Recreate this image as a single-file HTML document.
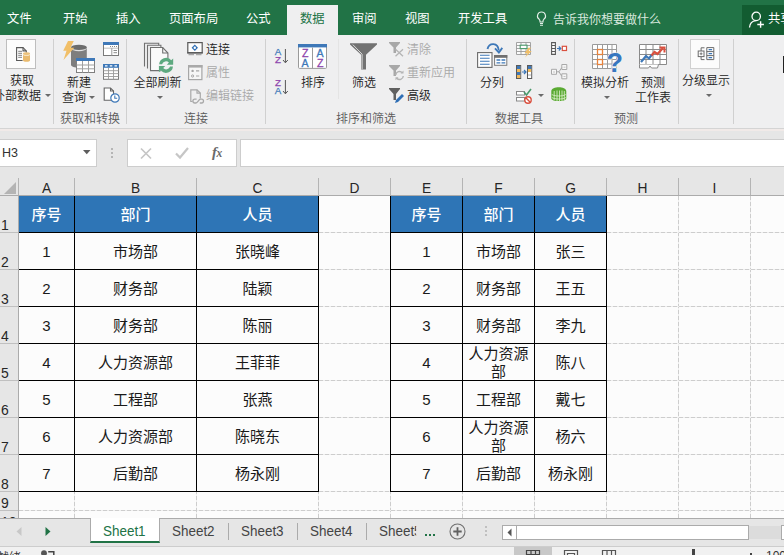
<!DOCTYPE html>
<html><head><meta charset="utf-8"><title>Excel</title>
<style>
html,body{margin:0;padding:0;}
body{width:784px;height:555px;overflow:hidden;position:relative;background:#fcfcfc;font-family:"Liberation Sans","Noto Sans CJK SC",sans-serif;font-size:12px;color:#262626;}
.a{position:absolute;white-space:nowrap;}
svg{position:absolute;overflow:visible;}
#tabs{left:0;top:0;width:784px;height:35px;background:#217346;}
.tab{position:absolute;top:11px;color:#fff;font-size:12.3px;line-height:16px;white-space:nowrap;}
#ribbon{left:0;top:35px;width:784px;height:93px;background:#efeff0;}
#fbar{left:0;top:129px;width:784px;height:48px;background:#e6e6e6;}
.rt{font-weight:350;position:absolute;font-size:12px;line-height:16px;white-space:nowrap;color:#222;}
.gl{font-weight:350;position:absolute;font-size:12px;line-height:16px;white-space:nowrap;color:#5a5a5a;}
.dis{color:#a8a8a8;}
.sep{position:absolute;top:39px;width:1px;height:85px;background:#d0d0d0;}
.dd{position:absolute;width:0;height:0;border-left:3px solid transparent;border-right:3px solid transparent;border-top:3px solid #6a6a6a;}
.ch{transform:scaleX(.9);position:absolute;top:177px;height:18px;text-align:center;font-size:15.3px;line-height:21px;color:#262626;}
.rh{position:absolute;left:0;width:18px;font-size:15.2px;color:#262626;}
.rh span{position:absolute;left:.5px;bottom:-.5px;line-height:16px;transform:scaleX(.92);transform-origin:0 0;}
.cell{position:absolute;box-sizing:border-box;border-right:1px solid #000;border-bottom:1px solid #000;text-align:center;font-size:15px;color:#1a1a1a;background:#fcfcfc;display:flex;align-items:center;justify-content:center;line-height:18.4px;white-space:normal;}
.cell span{position:relative;top:1.3px;display:block;}
.hd{background:#2e75b6;color:#fff;font-weight:500;}
.vg{position:absolute;top:196px;width:1px;height:322px;background:repeating-linear-gradient(180deg,#cdcdcd 0 4px,#eeeeee 4px 6px);}
.hg{position:absolute;left:19px;height:1px;width:765px;background:repeating-linear-gradient(90deg,#cdcdcd 0 4px,#eeeeee 4px 6px);}
#sheetbar{left:0;top:518px;width:784px;height:29px;border-bottom:1px solid #cdcdcd;background:#e6e6e6;border-top:1px solid #ababab;box-sizing:border-box;}
.st{position:absolute;top:521.5px;font-size:15.2px;line-height:18px;color:#444;white-space:nowrap;transform:scaleX(.885);transform-origin:0 0;}
#status{left:0;top:547px;width:784px;height:8px;background:#f1f1f1;}
.lt{position:absolute;font-size:9.8px;line-height:9px;-webkit-text-stroke:.25px currentColor;}
.lt2{position:absolute;font-size:10.6px;line-height:10px;-webkit-text-stroke:.3px currentColor;}

</style></head><body>
<div id="tabs" class="a"></div>
<div class="a" style="left:287px;top:5px;width:51px;height:30px;background:#efeff0"></div>
<div class="a" style="left:742px;top:5px;width:42px;height:30px;background:#125c31"></div>
<div class="tab" style="left:7px">文件</div>
<div class="tab" style="left:63px">开始</div>
<div class="tab" style="left:116px">插入</div>
<div class="tab" style="left:169px">页面布局</div>
<div class="tab" style="left:246px">公式</div>
<div class="tab" style="left:300px;color:#217346">数据</div>
<div class="tab" style="left:352px">审阅</div>
<div class="tab" style="left:405px">视图</div>
<div class="tab" style="left:458px">开发工具</div>
<div class="tab" style="left:553px;top:12px;font-size:12px;color:#d9e8de">告诉我你想要做什么</div>
<div class="tab" style="left:768px">共享</div>
<svg style="left:536px;top:11px" width="11" height="16" viewBox="0 0 11 16"><path d="M5.5 1a4 4 0 0 0-2.3 7.3c.5.5.8 1.200.8 2v.7h3v-.7c0-.8.3-1.500.8-2A4 4 0 0 0 5.500 1z" fill="none" stroke="#e4efe8" stroke-width="1.100"/><path d="M4 12.500h3M4 14.300h3" stroke="#e4efe8" stroke-width="1.100"/></svg>
<svg style="left:748px;top:11px" width="16" height="17" viewBox="0 0 16 17"><circle cx="8.200" cy="5.400" r="4.200" fill="none" stroke="#fff" stroke-width="1.300"/><path d="M1.500 16.500c.3-4 3-6.500 6.500-6.800" fill="none" stroke="#fff" stroke-width="1.300"/><path d="M12.600 10.200v6.600M9.300 13.500h6.600" stroke="#fff" stroke-width="1.400"/></svg>

<div id="ribbon" class="a"></div>
<div id="fbar" class="a"></div>
<div class="a" style="left:0;top:128px;width:784px;height:1px;background:#d4d4d4"></div>
<div class="a" style="left:0;top:129px;width:784px;height:2px;background:#f1eae8"></div>
<div class="sep" style="left:53px"></div>
<div class="sep" style="left:126px"></div>
<div class="sep" style="left:265px"></div>
<div class="sep" style="left:466px"></div>
<div class="sep" style="left:574px"></div>
<div class="sep" style="left:678px"></div>
<div class="sep" style="left:733px"></div>
<div class="sep" style="left:338px;height:60px;background:#e4e4e4"></div>

<!-- group 0 -->
<div class="a" style="left:6px;top:39px;width:30px;height:30px;box-sizing:border-box;border:1px solid #bebebe;background:#fcfcfc"></div>
<svg style="left:15px;top:46px" width="16" height="17" viewBox="0 0 16 17"><path d="M1.600 1.600h6.400l3.300 3.300v9.600h-9.700z" fill="#fff" stroke="#5a5a5a" stroke-width="1.100"/><path d="M8 1.600v3.300h3.300" fill="none" stroke="#5a5a5a" stroke-width="1.100"/><path d="M3.200 5.400h3.800M3.200 7.400h3.800M3.200 9.400h3.800M3.200 11.400h3.800" stroke="#9a9a9a" stroke-width="1.100"/><path d="M7.600 6.800h7.800v9h-7.800z" fill="#fcfcfc"/><path d="M8 7.600v6.800c0 1.700 7 1.700 7 0v-6.800z" fill="#e9ba6e"/><ellipse cx="11.500" cy="7.600" rx="3.500" ry="1.300" fill="#ecc27c"/><path d="M8 8.200c0 1.700 7 1.700 7 0" fill="none" stroke="#fbf3e4" stroke-width=".9"/></svg>
<div class="rt" style="left:10px;top:73px">获取</div>
<div class="rt" style="left:-7px;top:88px">外部数据</div>
<div class="dd" style="left:45px;top:94px"></div>

<!-- group 1 -->
<svg style="left:61px;top:40px" width="36" height="34" viewBox="0 0 36 34"><path d="M10 7.500v17.500c0 3.400 15.800 3.400 15.800 0v-17.500z" fill="#7e7e7e"/><ellipse cx="17.900" cy="8.300" rx="7.900" ry="2.900" fill="#e2e2e2"/><ellipse cx="17.900" cy="7.400" rx="7.900" ry="2.700" fill="#6c6c6c"/><path d="M7 1h5.800l-3.300 6.800h3.800L2.500 20l3-9.200H2.200z" fill="#f1bf68"/><rect x="15.500" y="18.500" width="18" height="14" fill="#fff" stroke="#7f7f7f"/><rect x="15" y="18" width="19" height="3" fill="#3e78b8"/><path d="M15.500 25h18M15.500 28.800h18M21.500 21v11.500M27.500 21v11.500" stroke="#a0a0a0" fill="none"/></svg>
<div class="rt" style="left:67px;top:75px">新建</div>
<div class="rt" style="left:62px;top:89.500px">查询</div>
<div class="dd" style="left:89px;top:96px"></div>
<svg style="left:103px;top:42px" width="16" height="14" viewBox="0 0 16 14"><rect x=".5" y=".5" width="15" height="13" fill="#fff" stroke="#7a7a7a"/><rect x="0" y="0" width="16" height="3" fill="#3e78b8"/><path d="M7 4.500h1M9 4.500h1M11 4.500h1M13 4.500h1" stroke="#8a8a8a"/><path d="M1 6.200h14" stroke="#b0b0b0" stroke-width=".8"/><path d="M8.800 6.200v7.300" stroke="#9a9a9a"/><path d="M10.500 8.500h3.500M10.500 10.700h3.500" stroke="#8a8a8a"/></svg>
<svg style="left:103px;top:64px" width="16" height="16" viewBox="0 0 16 16"><rect x=".5" y=".5" width="15" height="14.800" fill="#fff" stroke="#7a7a7a"/><rect x="0" y="0" width="16" height="3.800" fill="#3e78b8"/><path d="M2 1.800h2.500M6.800 1.800h2.500M11.500 1.800h2.500" stroke="#fff" stroke-width="1.200"/><path d="M.5 6.700h15M.5 9.600h15M.5 12.500h15M5.500 4v11.500M10.500 4v11.500" stroke="#9a9a9a" stroke-width=".9" fill="none"/></svg>
<svg style="left:102.500px;top:87px" width="17" height="16" viewBox="0 0 17 16"><path d="M1.200 1h6.300l3 3v9.200h-9.300z" fill="#fff" stroke="#666" stroke-width="1.100"/><path d="M7.500 1v3h3" fill="none" stroke="#666" stroke-width="1.100"/><circle cx="12" cy="11" r="4.200" fill="#fff" stroke="#3e78b8" stroke-width="1.200"/><path d="M11.800 8.600v2.700h2.400" fill="none" stroke="#3e78b8" stroke-width="1.100"/></svg>
<div class="gl" style="left:60px;top:110.500px">获取和转换</div>

<!-- group 2: 连接 -->
<svg style="left:143px;top:42px" width="32" height="32" viewBox="0 0 32 32"><path d="M1.500 24.400V1.200h14.200v2.100" fill="none" stroke="#707070" stroke-width="1.100"/><path d="M4.500 26.600V3.300h13.400v2.200" fill="none" stroke="#707070" stroke-width="1.100"/><path d="M7.500 5.500h12.200l5.200 5.500v17.600h-17.400z" fill="#fafafa" stroke="#707070" stroke-width="1.100"/><path d="M19.700 5.500v5.500h5.200" fill="none" stroke="#707070" stroke-width="1.100"/><circle cx="23.200" cy="23.500" r="7.800" fill="#f2f2f3"/><g transform="translate(23.050 23.350) scale(1.150) translate(-23.500 -24)"><path d="M17.500 23a6 6 0 0 1 10.500-3.500l1.700-1.500v5.500h-5.500l1.800-1.900a3.600 3.600 0 0 0-6 1.400zM29.500 25a6 6 0 0 1-10.500 3.500l-1.700 1.500v-5.500h5.500l-1.800 1.900a3.600 3.600 0 0 0 6-1.400z" fill="#5ea980"/></g></svg>
<div class="rt" style="left:133.500px;top:74.500px">全部刷新</div>
<div class="dd" style="left:156.500px;top:96px"></div>
<svg style="left:187px;top:42px" width="16" height="14" viewBox="0 0 16 14"><rect x=".8" y=".6" width="14.400" height="10.200" fill="#fdfdfd" stroke="#585858" stroke-width="1.200"/><path d="M.2 10.800h15.600" stroke="#585858" stroke-width="1.300"/><path d="M1.500 12.600h5.500M9 12.600h5.500" stroke="#a8a8a8" stroke-width="1.100"/><path d="M7.800 2.400l3.200 3.300-3.200 3.300-3.200-3.300z" fill="#2f6fb5"/><circle cx="7.800" cy="5.700" r="1.200" fill="#fff"/></svg>
<div class="rt" style="left:206px;top:41.500px">连接</div>
<svg style="left:187.500px;top:64.500px" width="16" height="16" viewBox="0 0 16 16"><rect x=".6" y=".6" width="13.300" height="14" fill="#f6f6f6" stroke="#a6a6a6" stroke-width="1.200"/><rect x="0" y="0" width="14.500" height="2.600" fill="#a9a9a9"/><circle cx="4.600" cy="5.900" r="1.200" fill="#a6a6a6"/><circle cx="4.600" cy="11" r="1.100" fill="none" stroke="#a6a6a6"/><path d="M8 5.900h3.200M8 11h3.200" stroke="#a6a6a6" stroke-width="1.200"/></svg>
<div class="rt dis" style="left:206px;top:64.500px">属性</div>
<svg style="left:190px;top:88.500px" width="15" height="15" viewBox="0 0 15 15"><path d="M2.500 12.500h-1.700V.8h6.200l3.300 3.300v5.400" fill="none" stroke="#a9a9a9" stroke-width="1.200"/><path d="M7 .8v3.300h3.300" fill="none" stroke="#a9a9a9" stroke-width="1.200"/><path d="M6.600 10.200h-1.800a1.900 1.900 0 0 0 0 3.800h1.200c1.600 0 2.800-3.800 4.400-3.800h1.200a1.900 1.900 0 0 1 0 3.800h-1.800" fill="none" stroke="#a9a9a9" stroke-width="1.300"/></svg>
<div class="rt dis" style="left:206px;top:87.500px">编辑链接</div>
<div class="gl" style="left:184px;top:110.500px">连接</div>

<!-- group 3: 排序和筛选 -->
<div class="lt" style="left:274.700px;top:46.500px;color:#3e78b8">A</div>
<div class="lt" style="left:275px;top:55.300px;color:#8e44ad">Z</div>
<svg style="left:282px;top:49px" width="8" height="16" viewBox="0 0 8 16"><path d="M3.400 0v13.500M1 11l2.400 2.800L5.800 11" fill="none" stroke="#555" stroke-width="1"/></svg>
<div class="lt" style="left:275px;top:78px;color:#8e44ad">Z</div>
<div class="lt" style="left:274.700px;top:86.400px;color:#3e78b8">A</div>
<svg style="left:282px;top:80px" width="8" height="16" viewBox="0 0 8 16"><path d="M3.400 0v13.500M1 11l2.400 2.800L5.800 11" fill="none" stroke="#555" stroke-width="1"/></svg>
<svg style="left:298px;top:44px" width="29" height="25" viewBox="0 0 29 25"><rect x=".5" y=".5" width="28" height="23.900" rx="1" fill="#fff" stroke="#9a9a9a"/><rect x="0" y="0" width="29" height="3.400" fill="#3e78b8"/><path d="M14.500 3.500v21" stroke="#9a9a9a"/></svg>
<div class="lt2" style="left:302px;top:48.300px;color:#8e44ad">Z</div>
<div class="lt2" style="left:301.500px;top:58.200px;color:#3e78b8">A</div>
<div class="lt2" style="left:316.500px;top:48.300px;color:#3e78b8">A</div>
<div class="lt2" style="left:317px;top:58.200px;color:#8e44ad">Z</div>
<div class="rt" style="left:301px;top:74.500px">排序</div>
<svg style="left:349px;top:43px" width="29" height="27" viewBox="0 0 29 27"><path d="M1 .2h27v1.200L17 11.800v14.800h-4.900V11.800L1 1.400z" fill="#727272"/><path d="M3.800 1.600l9.300 9.600v15" fill="none" stroke="#f4f4f4" stroke-width=".8"/></svg>
<div class="rt" style="left:352px;top:74.500px">筛选</div>
<svg style="left:389px;top:42px" width="16" height="15" viewBox="0 0 16 15"><path d="M0 0h11v1L7 5.500v5.500H4.500V5.500L0 1z" fill="#a8a8a8"/><path d="M6.500 7.200l7.500 7M14 7.200l-7.500 7" stroke="#b4b4b4" stroke-width="1.300"/></svg>
<div class="rt dis" style="left:407px;top:41.500px">清除</div>
<svg style="left:389px;top:65px" width="16" height="15" viewBox="0 0 16 15"><path d="M0 0h11v1L7 5.500v5.500H4.500V5.500L0 1z" fill="#a8a8a8"/><path d="M6.800 10a3.700 3.700 0 0 1 6.500-2.200M14.300 11a3.700 3.700 0 0 1-6.500 2.200" fill="none" stroke="#b4b4b4" stroke-width="1.400"/><path d="M14.500 5.500v3h-3zM6.500 15.300v-3h3z" fill="#b4b4b4"/></svg>
<div class="rt dis" style="left:407px;top:64.500px">重新应用</div>
<svg style="left:389px;top:88px" width="16" height="16" viewBox="0 0 16 16"><path d="M0 0h11v1L7 6v6H4.500V6L0 1z" fill="#606060"/><path d="M6 15l1-3 6-6 2 2-6 6z" fill="#2f6fb5"/></svg>
<div class="rt" style="left:407px;top:87.500px">高级</div>
<div class="gl" style="left:336px;top:110.500px">排序和筛选</div>

<!-- group 4: 数据工具 -->
<svg style="left:477px;top:42px" width="31" height="26" viewBox="0 0 31 26"><rect x=".6" y="10.600" width="14.400" height="14.800" fill="#fff" stroke="#6a6a6a" stroke-width="1.100"/><path d="M3 13.200h9.600M3 16.200h9.600M3 19.200h9.600M3 22.200h9.600" stroke="#3e78b8" stroke-width="1.100"/><rect x="17.600" y="13.500" width="12.200" height="9.800" fill="#fff" stroke="#7a7a7a"/><rect x="17.100" y="13" width="13.200" height="2.800" fill="#6f6f6f"/><path d="M19.500 18h3.800M24.500 18h3.800M19.500 20.800h3.800M24.500 20.800h3.800" stroke="#3e78b8" stroke-width="1.300"/><path d="M10.500 7c1.500-6.500 10.500-7 11.300 1.500" fill="none" stroke="#3e78b8" stroke-width="1.900"/><path d="M18 6.300l3.900 4.200 3.400-4.600" fill="none" stroke="#3e78b8" stroke-width="1.800"/></svg>
<div class="rt" style="left:480px;top:74.500px">分列</div>
<svg style="left:516px;top:42px" width="17" height="16" viewBox="0 0 17 16"><path d="M.5 .5h14v12h-14zM.5 3.500h14M.5 6.500h14M.5 9.500h14M5 .5v12M10 .5v12" fill="#fafafa" stroke="#9a9a9a" stroke-width=".9"/><rect x="4.200" y="3.200" width="6.800" height="3.400" fill="#fff" stroke="#4b9a6c" stroke-width="1.100"/><path d="M12.300 5.800l-3.800 5.500h3l-2.500 4.300 6.800-6.600h-3.100l2.400-3.200z" fill="#f1bf68"/></svg>
<svg style="left:516px;top:65px" width="17" height="14" viewBox="0 0 17 14"><rect x=".5" y=".5" width="4.200" height="13" fill="#fff" stroke="#5a5a5a"/><rect x="1" y="1" width="3.200" height="3" fill="#3e78b8"/><rect x="1" y="4" width="3.200" height="3" fill="#f0b95c"/><rect x="1" y="7" width="3.200" height="3" fill="#3e78b8"/><rect x="1" y="10" width="3.200" height="3" fill="#f0b95c"/><path d="M6 7h3.800M8 5l2 2-2 2" fill="none" stroke="#3e78b8" stroke-width="1.200"/><rect x="11.500" y=".5" width="4.200" height="13" fill="#fff" stroke="#5a5a5a"/><rect x="12" y="1" width="3.200" height="3" fill="#3e78b8"/><rect x="12" y="4" width="3.200" height="3" fill="#f0b95c"/><path d="M12 10h3.200" stroke="#9a9a9a" stroke-width=".8"/></svg>
<svg style="left:516px;top:88px" width="17" height="16" viewBox="0 0 17 16"><rect x=".5" y="3.500" width="8" height="3.500" fill="#fff" stroke="#8a8a8a"/><rect x=".5" y="9.500" width="8" height="3.500" fill="#fff" stroke="#8a8a8a"/><path d="M8 4l2.500 3L15 1" fill="none" stroke="#4b9a6c" stroke-width="1.600"/><circle cx="12" cy="12" r="3.200" fill="#fff" stroke="#d9503f" stroke-width="1.400"/><path d="M9.800 9.800l4.400 4.400" stroke="#d9503f" stroke-width="1.400"/></svg>
<div class="dd" style="left:538px;top:94px"></div>
<svg style="left:551px;top:42px" width="17" height="13" viewBox="0 0 17 13"><path d="M.6 .6h3.800v11.800h-3.800zM.6 3.500h3.800M.6 6.500h3.800M.6 9.500h3.800" fill="#fff" stroke="#5a5a5a" stroke-width="1.100"/><path d="M6 6.500h3.600M7.800 4.500l2 2-2 2" fill="none" stroke="#3e78b8" stroke-width="1.200"/><rect x="11.300" y="4.300" width="4.200" height="4.200" fill="#fff" stroke="#d9503f" stroke-width="1.200"/></svg>
<svg style="left:551px;top:64px" width="17" height="16" viewBox="0 0 17 16"><path d="M.5 5.300h5v5h-5zM10.800 .5h5v5h-5zM10.800 9.800h5v5h-5z" fill="#f6f6f6" stroke="#a8a8a8"/><path d="M5.500 7.800h2.500M8 7.800l2.800-4.300M8 7.800l2.800 4.500" fill="none" stroke="#a8a8a8"/><path d="M2 8h2M12.500 3.200h2M12.500 12.500h2" stroke="#b8b8b8" stroke-width=".8"/></svg>
<svg style="left:551px;top:87px" width="17" height="16" viewBox="0 0 17 16"><path d="M.3 4.200c0-5.200 15-5.200 15 0v7c0 3.800-15 3.800-15 0z" fill="#5aaa32"/><path d="M3.200 4v9M6 3.500v10.500M8.500 3.500v11M11 3.500v10.500M13.300 4v9M.8 7.500c3 2 11 2 14 0M.8 10.500c3 2 11 2 14 0" stroke="#dff0d0" stroke-width=".8" fill="none"/></svg>
<div class="gl" style="left:495px;top:110.500px">数据工具</div>

<!-- group 5: 预测 -->
<svg style="left:592px;top:44px" width="30" height="29" viewBox="0 0 30 29"><path d="M.5 .5h24v24h-24zM.5 5.500h24M.5 10.500h24M.5 15.500h24M.5 20h24M5.500 .5v24M10.500 .5v24M15.500 .5v24M20 .5v24" fill="#fff" stroke="#9a9a9a"/><rect x="5.500" y="5.500" width="5" height="5" fill="#fff" stroke="#e8823a" stroke-width="1.300"/><rect x="5.500" y="15.500" width="5" height="5" fill="#fff" stroke="#e8823a" stroke-width="1.300"/></svg>
<div class="a" style="left:606.500px;top:49.500px;font-size:27px;line-height:27px;font-weight:bold;color:#3777c0;font-family:'Liberation Sans',sans-serif;-webkit-text-stroke:1.500px #efeff0;paint-order:stroke fill">?</div>
<div class="rt" style="left:581px;top:74.500px">模拟分析</div>
<div class="dd" style="left:604px;top:96px"></div>
<svg style="left:638px;top:43px" width="30" height="26" viewBox="0 0 30 26"><path d="M1.500 1.500h27v20h-27zM1.500 6.500h27M1.500 11.500h27M1.500 16.500h27M8 1.500v20M15 1.500v20M22 1.500v20" fill="#fff" stroke="#8a8a8a"/><path d="M1.500 21.500v3.500h9l1.500-2 1.500 2h6l1-3.500" fill="#fff" stroke="#8a8a8a"/><path d="M3 19l5-6 3 2.500 3-4" fill="none" stroke="#3e78b8" stroke-width="2.200"/><path d="M13.500 12.500l3-3.500 3 2 5.500-6" fill="none" stroke="#d9503f" stroke-width="2.200"/><path d="M21.500 4.500h5v5" fill="none" stroke="#d9503f" stroke-width="2"/></svg>
<div class="rt" style="left:641px;top:74.500px">预测</div>
<div class="rt" style="left:635px;top:89.500px">工作表</div>
<div class="gl" style="left:614px;top:110.500px">预测</div>

<!-- group 6 -->
<div class="a" style="left:690px;top:39px;width:30px;height:30px;box-sizing:border-box;border:1px solid #d0d0d0;background:#fcfcfc"></div>
<svg style="left:697px;top:46px" width="18" height="16" viewBox="0 0 18 16"><path d="M4.100 5V1.800h3.400M4.100 10.600v3h3.400" fill="none" stroke="#6a6a6a"/><rect x="1.200" y="5" width="5.800" height="5.600" fill="#fff" stroke="#6a6a6a"/><path d="M2.700 7.800h2.800M4.100 6.400v2.800" stroke="#6a6a6a" stroke-width=".9"/><path d="M9.800 1.600h7v12h-7zM9.800 5.600h7M9.800 9.600h7" fill="#fff" stroke="#6a6a6a"/><path d="M11.600 3.600h3.500M11.600 7.600h3.500M11.600 11.600h3.500" stroke="#3e78b8" stroke-width="1.200"/></svg>
<div class="rt" style="left:682px;top:73.200px">分级显示</div>
<div class="dd" style="left:705.500px;top:94px"></div>
<div class="a" style="left:783px;top:56px;width:1px;height:17px;background:#222"></div>

<!-- formula bar -->
<div class="a" style="left:-1px;top:139px;width:98px;height:28px;box-sizing:border-box;border:1px solid #cdcdcd;background:#fff"></div>
<div class="a" style="left:2px;top:145px;font-size:12.500px;line-height:16px;color:#333">H3</div>
<svg style="left:83px;top:150px" width="8" height="5" viewBox="0 0 8 5"><path d="M0 0h7.500L3.750 4.200z" fill="#5e5e5e"/></svg>
<div class="a" style="left:111px;top:148px;width:2px;height:2px;background:#b5b5b5;box-shadow:0 4px 0 #b5b5b5,0 8px 0 #b5b5b5"></div>
<div class="a" style="left:127px;top:139px;width:110px;height:28px;box-sizing:border-box;border:1px solid #cdcdcd;background:#fff"></div>
<svg style="left:140px;top:148px" width="12" height="11" viewBox="0 0 12 11"><path d="M1 .5l10 10M11 .5l-10 10" stroke="#c6c6c6" stroke-width="1.700"/></svg>
<svg style="left:175px;top:147px" width="14" height="12" viewBox="0 0 14 12"><path d="M1 6.500l4 4L13 1" fill="none" stroke="#c6c6c6" stroke-width="2.200"/></svg>
<div class="a" style="left:212px;top:144px;font-family:'Liberation Serif',serif;font-style:italic;font-size:15px;line-height:16px;color:#6a6a6a;letter-spacing:-.5px"><b>f</b><b style="font-size:11.500px">x</b></div>
<div class="a" style="left:240px;top:139px;width:560px;height:28px;box-sizing:border-box;border:1px solid #cdcdcd;background:#fff"></div>
<div id="grid">
<div class="a" style="left:0;top:177px;width:784px;height:19px;background:#e6e6e6"></div>
<div class="a" style="left:0;top:195px;width:784px;height:1px;background:#ababab"></div>
<div class="ch" style="left:19px;width:55px">A</div>
<div class="ch" style="left:75px;width:121px">B</div>
<div class="ch" style="left:197px;width:121px">C</div>
<div class="ch" style="left:319px;width:71px">D</div>
<div class="ch" style="left:391px;width:71px">E</div>
<div class="ch" style="left:463px;width:71px">F</div>
<div class="ch" style="left:535px;width:71px">G</div>
<div class="ch" style="left:607px;width:71px">H</div>
<div class="ch" style="left:679px;width:71px">I</div>
<div class="a" style="left:18px;top:178px;width:1px;height:17px;background:#b4b4b4"></div>
<div class="a" style="left:74px;top:178px;width:1px;height:17px;background:#b4b4b4"></div>
<div class="a" style="left:196px;top:178px;width:1px;height:17px;background:#b4b4b4"></div>
<div class="a" style="left:318px;top:178px;width:1px;height:17px;background:#b4b4b4"></div>
<div class="a" style="left:390px;top:178px;width:1px;height:17px;background:#b4b4b4"></div>
<div class="a" style="left:462px;top:178px;width:1px;height:17px;background:#b4b4b4"></div>
<div class="a" style="left:534px;top:178px;width:1px;height:17px;background:#b4b4b4"></div>
<div class="a" style="left:606px;top:178px;width:1px;height:17px;background:#b4b4b4"></div>
<div class="a" style="left:678px;top:178px;width:1px;height:17px;background:#b4b4b4"></div>
<div class="a" style="left:750px;top:178px;width:1px;height:17px;background:#b4b4b4"></div>
<svg class="a" style="left:4px;top:182px" width="13" height="13"><path d="M12 0V12H0Z" fill="#b4b4b4"/></svg>
<div class="a" style="left:0;top:196px;width:18px;height:322px;background:#e6e6e6"></div>
<div class="a" style="left:18px;top:196px;width:1px;height:322px;background:#ababab"></div>
<div class="rh" style="top:196px;height:36px"><span>1</span></div>
<div class="a" style="left:0;top:232px;width:18px;height:1px;background:#c0c0c0"></div>
<div class="rh" style="top:233px;height:36px"><span>2</span></div>
<div class="a" style="left:0;top:269px;width:18px;height:1px;background:#c0c0c0"></div>
<div class="rh" style="top:270px;height:36px"><span>3</span></div>
<div class="a" style="left:0;top:306px;width:18px;height:1px;background:#c0c0c0"></div>
<div class="rh" style="top:307px;height:36px"><span>4</span></div>
<div class="a" style="left:0;top:343px;width:18px;height:1px;background:#c0c0c0"></div>
<div class="rh" style="top:344px;height:36px"><span>5</span></div>
<div class="a" style="left:0;top:380px;width:18px;height:1px;background:#c0c0c0"></div>
<div class="rh" style="top:381px;height:36px"><span>6</span></div>
<div class="a" style="left:0;top:417px;width:18px;height:1px;background:#c0c0c0"></div>
<div class="rh" style="top:418px;height:36px"><span>7</span></div>
<div class="a" style="left:0;top:454px;width:18px;height:1px;background:#c0c0c0"></div>
<div class="rh" style="top:455px;height:36px"><span>8</span></div>
<div class="a" style="left:0;top:491px;width:18px;height:1px;background:#c0c0c0"></div>
<div class="rh" style="top:492px;height:18px"><span>9</span></div>
<div class="a" style="left:0;top:510px;width:18px;height:1px;background:#c0c0c0"></div>
<div class="rh" style="top:511px;height:18px"><span>10</span></div>
<div class="a" style="left:0;top:529px;width:18px;height:1px;background:#c0c0c0"></div>
<div class="vg" style="left:74px"></div>
<div class="vg" style="left:196px"></div>
<div class="vg" style="left:318px"></div>
<div class="vg" style="left:390px"></div>
<div class="vg" style="left:462px"></div>
<div class="vg" style="left:534px"></div>
<div class="vg" style="left:606px"></div>
<div class="vg" style="left:678px"></div>
<div class="vg" style="left:750px"></div>
<div class="hg" style="top:232px"></div>
<div class="hg" style="top:269px"></div>
<div class="hg" style="top:306px"></div>
<div class="hg" style="top:343px"></div>
<div class="hg" style="top:380px"></div>
<div class="hg" style="top:417px"></div>
<div class="hg" style="top:454px"></div>
<div class="hg" style="top:491px"></div>
<div class="hg" style="top:510px"></div>
<div class="cell hd" style="left:19px;top:196px;width:56px;height:37px"><span>序号</span></div>
<div class="cell hd" style="left:75px;top:196px;width:122px;height:37px"><span>部门</span></div>
<div class="cell hd" style="left:197px;top:196px;width:122px;height:37px"><span>人员</span></div>
<div class="cell" style="left:19px;top:233px;width:56px;height:37px"><span>1</span></div>
<div class="cell" style="left:75px;top:233px;width:122px;height:37px"><span>市场部</span></div>
<div class="cell" style="left:197px;top:233px;width:122px;height:37px"><span>张晓峰</span></div>
<div class="cell" style="left:19px;top:270px;width:56px;height:37px"><span>2</span></div>
<div class="cell" style="left:75px;top:270px;width:122px;height:37px"><span>财务部</span></div>
<div class="cell" style="left:197px;top:270px;width:122px;height:37px"><span>陆颖</span></div>
<div class="cell" style="left:19px;top:307px;width:56px;height:37px"><span>3</span></div>
<div class="cell" style="left:75px;top:307px;width:122px;height:37px"><span>财务部</span></div>
<div class="cell" style="left:197px;top:307px;width:122px;height:37px"><span>陈丽</span></div>
<div class="cell" style="left:19px;top:344px;width:56px;height:37px"><span>4</span></div>
<div class="cell" style="left:75px;top:344px;width:122px;height:37px"><span>人力资源部</span></div>
<div class="cell" style="left:197px;top:344px;width:122px;height:37px"><span>王菲菲</span></div>
<div class="cell" style="left:19px;top:381px;width:56px;height:37px"><span>5</span></div>
<div class="cell" style="left:75px;top:381px;width:122px;height:37px"><span>工程部</span></div>
<div class="cell" style="left:197px;top:381px;width:122px;height:37px"><span>张燕</span></div>
<div class="cell" style="left:19px;top:418px;width:56px;height:37px"><span>6</span></div>
<div class="cell" style="left:75px;top:418px;width:122px;height:37px"><span>人力资源部</span></div>
<div class="cell" style="left:197px;top:418px;width:122px;height:37px"><span>陈晓东</span></div>
<div class="cell" style="left:19px;top:455px;width:56px;height:37px"><span>7</span></div>
<div class="cell" style="left:75px;top:455px;width:122px;height:37px"><span>后勤部</span></div>
<div class="cell" style="left:197px;top:455px;width:122px;height:37px"><span>杨永刚</span></div>
<div class="cell hd" style="left:391px;top:196px;width:72px;height:37px"><span>序号</span></div>
<div class="cell hd" style="left:463px;top:196px;width:72px;height:37px"><span>部门</span></div>
<div class="cell hd" style="left:535px;top:196px;width:72px;height:37px"><span>人员</span></div>
<div class="cell" style="left:391px;top:233px;width:72px;height:37px"><span>1</span></div>
<div class="cell" style="left:463px;top:233px;width:72px;height:37px"><span>市场部</span></div>
<div class="cell" style="left:535px;top:233px;width:72px;height:37px"><span>张三</span></div>
<div class="cell" style="left:391px;top:270px;width:72px;height:37px"><span>2</span></div>
<div class="cell" style="left:463px;top:270px;width:72px;height:37px"><span>财务部</span></div>
<div class="cell" style="left:535px;top:270px;width:72px;height:37px"><span>王五</span></div>
<div class="cell" style="left:391px;top:307px;width:72px;height:37px"><span>3</span></div>
<div class="cell" style="left:463px;top:307px;width:72px;height:37px"><span>财务部</span></div>
<div class="cell" style="left:535px;top:307px;width:72px;height:37px"><span>李九</span></div>
<div class="cell" style="left:391px;top:344px;width:72px;height:37px"><span>4</span></div>
<div class="cell" style="left:463px;top:344px;width:72px;height:37px"><span>人力资源部</span></div>
<div class="cell" style="left:535px;top:344px;width:72px;height:37px"><span>陈八</span></div>
<div class="cell" style="left:391px;top:381px;width:72px;height:37px"><span>5</span></div>
<div class="cell" style="left:463px;top:381px;width:72px;height:37px"><span>工程部</span></div>
<div class="cell" style="left:535px;top:381px;width:72px;height:37px"><span>戴七</span></div>
<div class="cell" style="left:391px;top:418px;width:72px;height:37px"><span>6</span></div>
<div class="cell" style="left:463px;top:418px;width:72px;height:37px"><span>人力资源部</span></div>
<div class="cell" style="left:535px;top:418px;width:72px;height:37px"><span>杨六</span></div>
<div class="cell" style="left:391px;top:455px;width:72px;height:37px"><span>7</span></div>
<div class="cell" style="left:463px;top:455px;width:72px;height:37px"><span>后勤部</span></div>
<div class="cell" style="left:535px;top:455px;width:72px;height:37px"><span>杨永刚</span></div>
<div class="a" style="left:390px;top:196px;width:1px;height:296px;background:#000"></div>
</div>
<div id="sheetbar" class="a"></div>
<div id="status" class="a"></div>
<svg style="left:16px;top:527px" width="6" height="9" viewBox="0 0 6 9"><path d="M5.500 0v9L.5 4.500z" fill="#c8c8c8"/></svg>
<svg style="left:45px;top:527px" width="6" height="9" viewBox="0 0 6 9"><path d="M.5 0v9l5-4.500z" fill="#217346"/></svg>
<div class="a" style="left:90px;top:518px;width:70px;height:25px;background:#fff;border-bottom:2px solid #217346;border-left:1px solid #ababab;border-right:1px solid #ababab;box-sizing:border-box"></div>
<div class="st" style="left:103px;color:#217346">Sheet1</div>
<div class="st" style="left:172px">Sheet2</div>
<div class="st" style="left:241px">Sheet3</div>
<div class="st" style="left:310px">Sheet4</div>
<div class="st" style="left:379px;width:42px;overflow:hidden">Sheet5</div>
<div class="a" style="left:228px;top:523px;width:1px;height:17px;background:#ababab"></div>
<div class="a" style="left:297px;top:523px;width:1px;height:17px;background:#ababab"></div>
<div class="a" style="left:366px;top:523px;width:1px;height:17px;background:#ababab"></div>
<div class="a" style="left:425px;top:533.500px;width:2px;height:2px;background:#217346;box-shadow:4px 0 0 #217346,8px 0 0 #217346"></div>
<svg style="left:448.700px;top:523.200px" width="17" height="17" viewBox="0 0 17 17"><circle cx="8.500" cy="8.500" r="7.500" fill="none" stroke="#707070" stroke-width="1.100"/><path d="M8.500 4.300v8.400M4.300 8.500h8.400" stroke="#606060" stroke-width="1.800"/></svg>
<div class="a" style="left:485px;top:526px;width:2px;height:2px;background:#c0c0c0;box-shadow:0 4px 0 #c0c0c0,0 8px 0 #c0c0c0"></div>
<div class="a" style="left:502px;top:525px;width:15px;height:15px;box-sizing:border-box;border:1px solid #ababab;background:#fff"></div>
<svg style="left:507px;top:528px" width="5" height="9" viewBox="0 0 5 9"><path d="M4.500 .5v8L.5 4.500z" fill="#555"/></svg>
<div class="a" style="left:516px;top:525px;width:233px;height:15px;box-sizing:border-box;border:1px solid #ababab;background:#fff"></div>
<div class="a" style="left:749px;top:526px;width:32px;height:13px;background:#dcdcdc"></div>
<div class="a" style="left:781px;top:525px;width:15px;height:15px;box-sizing:border-box;border:1px solid #ababab;background:#fff"></div>
<div class="a" style="left:514px;top:547px;width:38px;height:8px;background:#c8c8c8"></div>
<svg style="left:526px;top:550px" width="14" height="8" viewBox="0 0 14 8"><path d="M.5 .5h13v8h-13zM.5 4.500h13M5 .5v8M9.500 .5v8" fill="none" stroke="#444" stroke-width="1.200"/></svg>
<svg style="left:564px;top:550px" width="14" height="8" viewBox="0 0 14 8"><path d="M.5 .5h13v8h-13z" fill="none" stroke="#555" stroke-width="1.200"/><path d="M3.500 3.500h7v5h-7z" fill="none" stroke="#555" stroke-width="1.200"/></svg>
<svg style="left:602px;top:550px" width="14" height="8" viewBox="0 0 14 8"><path d="M.5 .5h13v8h-13zM5 .5v8M9.500 .5v8" fill="none" stroke="#555" stroke-width="1.200"/></svg>
<div class="a" style="left:692px;top:549px;width:3px;height:8px;background:#444"></div>
<div class="a" style="left:750px;top:553px;width:2px;height:3px;background:#444"></div>
<div class="a" style="left:766px;top:550px;font-size:12px;line-height:12px;color:#333">100%</div>
<div class="a" style="left:-3px;top:551.500px;font-size:12px;line-height:13px;color:#333">就绪</div>
<svg style="left:41px;top:550px" width="14" height="8" viewBox="0 0 14 8"><circle cx="3" cy="3.200" r="2.900" fill="#555"/><path d="M7.200 1.800h5.600v5" fill="none" stroke="#444" stroke-width="1.500"/></svg>
</body></html>
